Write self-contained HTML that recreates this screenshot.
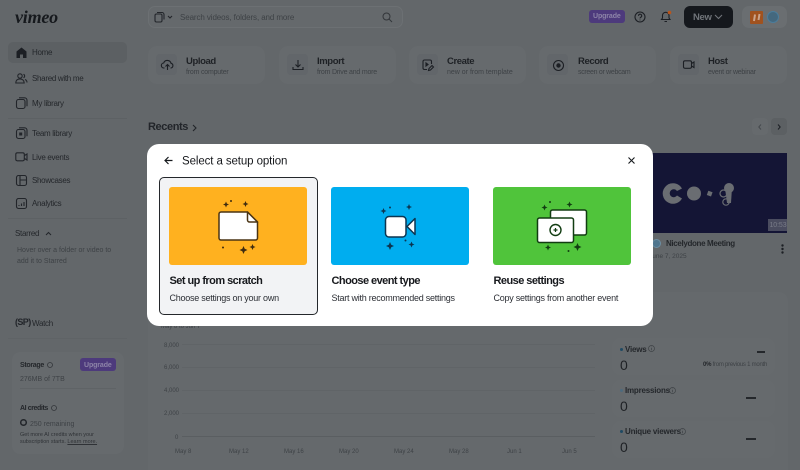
<!DOCTYPE html>
<html><head><meta charset="utf-8">
<style>
html,body{margin:0;padding:0;width:800px;height:470px;overflow:hidden;background:#63676a;font-family:"Liberation Sans",sans-serif}
#w{position:absolute;left:0;top:0;width:800px;height:470px;overflow:hidden;filter:blur(.35px)}
.t{position:absolute;white-space:nowrap;line-height:1;color:#24272b}
.b{position:absolute;box-sizing:border-box}
svg{position:absolute;overflow:visible;fill:none}
.n{font-size:8px;color:#24272b;letter-spacing:-.3px}
.c{background:#666a6d;border-radius:9px;height:38px;width:117px;top:46px}
.cs{position:absolute;left:8px;top:8px;width:21px;height:21px;background:#62666a;border-radius:4px}
.h{font-size:9.5px;font-weight:700;color:#1e2125;letter-spacing:-.4px}
.s{font-size:7px;color:#3e4246;letter-spacing:-.2px}
.g{position:absolute;left:182px;width:413px;height:1px;background:#606467}
.l{font-size:6px;color:#3e4246}
.k{background:#666a6d;border-radius:8px;left:612px;width:163px;height:37px}
.m{font-size:8px;font-weight:700;color:#24272b;letter-spacing:-.2px}
.z{font-size:14px;color:#1e2125}
.d{position:absolute;width:3px;height:3px;border-radius:50%;background:#1f4a63}
.ct{font-size:11px;font-weight:700;color:#17191d;letter-spacing:-.55px}
.cd{font-size:9px;color:#2c2f35;letter-spacing:-.25px}
</style></head><body><div id="w">

<!-- top bar -->
<div class="t" style="left:15px;top:7px;font:italic 700 18px 'Liberation Serif',serif;color:#16191d;letter-spacing:-.2px">vimeo</div>
<div class="b" style="left:148px;top:6px;width:255px;height:22px;border:1px solid #6c7073;border-radius:7px;background:#65696c"></div>
<svg style="left:154px;top:11px" width="20" height="12" stroke="#22252a" stroke-width="1.100"><rect x="1" y="3" width="7" height="8" rx="1.500"/><path d="M3 1.500h5a2 2 0 0 1 2 2v5"/><path d="M14 5l2 2 2-2"/></svg>
<div class="t" style="left:180px;top:13.500px;font-size:8px;color:#3e4246;letter-spacing:-.1px">Search videos, folders, and more</div>
<svg style="left:382px;top:12px" width="11" height="11" stroke="#33363a" stroke-width="1"><circle cx="4.500" cy="4.500" r="3.500"/><path d="M7 7l3 3"/></svg>

<div class="b" style="left:589px;top:10px;width:36px;height:13px;background:#4d3a7c;border-radius:3px"></div>
<div class="t" style="left:593px;top:13px;font-size:7px;font-weight:700;color:#8d84a8;letter-spacing:-.1px">Upgrade</div>
<svg style="left:634px;top:11px" width="12" height="12" stroke="#1c1f24" stroke-width="1.100"><circle cx="6" cy="6" r="5"/><path d="M4.500 4.800a1.600 1.600 0 1 1 2.300 1.400c-.6.300-.8.600-.8 1.200M6 8.600v.8"/></svg>
<svg style="left:660px;top:10px" width="12" height="13" stroke="#1c1f24" stroke-width="1.100"><path d="M1.500 9.500h8.500l-1-1.500V5a3.300 3.300 0 0 0-6.500 0v3zM4.500 11.500h2.500"/><circle cx="9.500" cy="2.500" r="1.800" fill="#b9551c" stroke="none"/></svg>
<div class="b" style="left:684px;top:6px;width:49px;height:22px;background:#15181d;border-radius:6px"></div>
<div class="t" style="left:693px;top:12.500px;font-size:9.500px;font-weight:700;color:#70747a;letter-spacing:-.3px">New</div>
<svg style="left:714px;top:14px" width="9" height="6" stroke="#70747a" stroke-width="1.100"><path d="M1 1l3.500 3.500L8 1"/></svg>
<div class="b" style="left:742px;top:6px;width:45px;height:22px;background:#6a6e71;border-radius:7px"></div>
<div class="b" style="left:750px;top:11px;width:13px;height:13px;background:#a0521f;border-radius:1px"></div>
<svg style="left:752px;top:13px" width="9" height="9" stroke="#caa48c" stroke-width="2"><path d="M3 1.500L2 8M7.500 1L6.500 7"/></svg>
<div class="b" style="left:767px;top:11px;width:12px;height:12px;background:#44687e;border-radius:50%;border:1.500px solid #4a7d9c"></div>

<!-- sidebar -->
<div class="b" style="left:8px;top:42px;width:119px;height:21px;background:#5c6063;border-radius:5px"></div>
<svg style="left:16px;top:47px" width="11" height="11"><path fill="#1c1f24" d="M5.500.5L.5 4.500V11h3.500V7.500h3V11h3.500V4.500z"/></svg>
<div class="t n" style="left:32px;top:49px">Home</div>
<svg style="left:15px;top:73px" width="13" height="11" stroke="#22252a" stroke-width="1.100"><circle cx="5" cy="3" r="2.200"/><path d="M.8 10c0-2.800 1.800-4 4.200-4s4 1 4.200 4zM8.500 1.200a2 2 0 0 1 0 3.600M10 6.500c1.300.5 2 1.600 2 3"/></svg>
<div class="t n" style="left:32px;top:75px;">Shared with me</div>
<svg style="left:16px;top:97px" width="12" height="12" stroke="#22252a" stroke-width="1.100"><rect x=".5" y="2.500" width="8.500" height="9" rx="2"/><path d="M3 .8h5.500a2.500 2.500 0 0 1 2.500 2.500v6"/></svg>
<div class="t n" style="left:32px;top:100px">My library</div>
<div class="b" style="left:8px;top:118px;width:119px;height:1px;background:#5d6164"></div>
<svg style="left:16px;top:127px" width="12" height="12" stroke="#22252a" stroke-width="1.100"><rect x=".5" y="2.500" width="8.500" height="9" rx="2"/><path d="M3 .8h5.500a2.500 2.500 0 0 1 2.500 2.500v6"/><rect x="3.200" y="5.500" width="3" height="3" fill="#22252a" stroke="none"/></svg>
<div class="t n" style="left:32px;top:130px">Team library</div>
<svg style="left:15px;top:152px" width="13" height="10" stroke="#22252a" stroke-width="1.100"><rect x=".8" y=".8" width="8.500" height="8" rx="1.500"/><path d="M9.500 3.500l2.500-1.500v6L9.500 6.500"/></svg>
<div class="t n" style="left:32px;top:153.500px">Live events</div>
<svg style="left:16px;top:175px" width="11" height="11" stroke="#22252a" stroke-width="1.100"><rect x=".5" y=".5" width="10" height="10" rx="2"/><path d="M4 .5v10M4 5h6.500"/></svg>
<div class="t n" style="left:32px;top:177px">Showcases</div>
<svg style="left:16px;top:198px" width="11" height="11" stroke="#22252a" stroke-width="1.100"><rect x=".5" y=".5" width="10" height="10" rx="2"/><path d="M3 8V7M5.500 8V5.500M8 8V4"/></svg>
<div class="t n" style="left:32px;top:200px">Analytics</div>
<div class="b" style="left:8px;top:218px;width:119px;height:1px;background:#5d6164"></div>
<div class="t n" style="left:15px;top:230px">Starred</div>
<svg style="left:45px;top:231px" width="7" height="5" stroke="#22252a" stroke-width="1"><path d="M1 4l2.500-2.500L6 4"/></svg>
<div class="t" style="left:17px;top:246px;font-size:7px;line-height:10.500px;color:#3e4246">Hover over a folder or video to<br>add it to Starred</div>
<div class="t" style="left:15px;top:318px;font-size:9px;color:#22252a;font-weight:700;letter-spacing:-.6px">(SP)</div>
<div class="t n" style="left:32px;top:320px;">Watch</div>
<div class="b" style="left:8px;top:338px;width:119px;height:1px;background:#5f6366"></div>
<div class="b" style="left:12px;top:352px;width:112px;height:102px;background:#666a6d;border-radius:8px"></div>
<div class="t" style="left:20px;top:362px;font-size:7px;font-weight:700;color:#24272b;letter-spacing:-.3px">Storage</div>
<svg style="left:47px;top:362px" width="6" height="6" stroke="#33363a" stroke-width=".8"><circle cx="3" cy="3" r="2.500"/></svg>
<div class="b" style="left:80px;top:358px;width:36px;height:13px;background:#4d3a7c;border-radius:3px"></div>
<div class="t" style="left:84px;top:361.500px;font-size:7px;font-weight:700;color:#8d84a8;letter-spacing:-.1px">Upgrade</div>
<div class="t" style="left:20px;top:376px;font-size:7px;color:#3e4246">276MB of 7TB</div>
<div class="b" style="left:20px;top:388px;width:96px;height:1px;background:#5f6366"></div>
<div class="t" style="left:20px;top:405px;font-size:7px;font-weight:700;color:#24272b;letter-spacing:-.4px">AI credits</div>
<svg style="left:51px;top:405px" width="6" height="6" stroke="#33363a" stroke-width=".8"><circle cx="3" cy="3" r="2.500"/></svg>
<svg style="left:20px;top:419px" width="7" height="7" stroke="#22252a" stroke-width="1.500"><circle cx="3.500" cy="3.500" r="2.800"/></svg>
<div class="t" style="left:30px;top:420.500px;font-size:7px;color:#3e4246">250 remaining</div>
<div class="t" style="left:20px;top:432px;font-size:5.500px;line-height:7px;color:#2f3236">Get more AI credits when your<br>subscription starts. <u>Learn more.</u></div>

<!-- action cards -->
<div class="b c" style="left:148px"><div class="cs"></div></div>
<svg style="left:161px;top:59px" width="13" height="12" stroke="#1c1f24" stroke-width="1.100"><path d="M3.500 9H3a2.500 2.500 0 0 1-.3-5 3.800 3.800 0 0 1 7.300.3A2.400 2.400 0 0 1 10 9h-.5M6.500 11V6M4.500 7.500l2-2 2 2"/></svg>
<div class="t h" style="left:186px;top:56.500px">Upload</div><div class="t s" style="left:186px;top:68.500px">from computer</div>
<div class="b c" style="left:279px"><div class="cs"></div></div>
<svg style="left:292px;top:59px" width="12" height="12" stroke="#1c1f24" stroke-width="1.100"><path d="M6 1v7M3.500 5.500L6 8l2.500-2.500M1 8v2.500h10V8"/></svg>
<div class="t h" style="left:317px;top:56.500px">Import</div><div class="t s" style="left:317px;top:68.500px">from Drive and more</div>
<div class="b c" style="left:409px"><div class="cs"></div></div>
<svg style="left:422px;top:59px" width="13" height="13" stroke="#1c1f24" stroke-width="1.100"><path d="M5 10.500H2.500a1.500 1.500 0 0 1-1.500-1.500V2.500A1.500 1.500 0 0 1 2.500 1H8a1.500 1.500 0 0 1 1.500 1.500V5M6.500 11.500l.5-2 3-3 1.500 1.500-3 3z"/><path d="M4 4l2 1.500L4 7z" fill="#1c1f24"/></svg>
<div class="t h" style="left:447px;top:56.500px">Create</div><div class="t s" style="left:447px;top:68.500px;letter-spacing:0">new or from template</div>
<div class="b c" style="left:539px"><div class="cs"></div></div>
<svg style="left:552px;top:59px" width="13" height="13" stroke="#1c1f24" stroke-width="1.100"><circle cx="6.500" cy="6.500" r="5"/><circle cx="6.500" cy="6.500" r="2.200" fill="#1c1f24" stroke="none"/></svg>
<div class="t h" style="left:578px;top:56.500px">Record</div><div class="t s" style="left:578px;top:68.500px;letter-spacing:-.3px">screen or webcam</div>
<div class="b c" style="left:670px"><div class="cs"></div></div>
<svg style="left:683px;top:60px" width="12" height="10" stroke="#1c1f24" stroke-width="1.100"><rect x=".5" y=".8" width="8" height="7.500" rx="1.500"/><path d="M8.500 3.500l2.500-1.500v5.500L8.500 6"/></svg>
<div class="t h" style="left:708px;top:56.500px">Host</div><div class="t s" style="left:708px;top:68.500px;letter-spacing:-.25px">event or webinar</div>

<div class="t" style="left:148px;top:122px;font-size:11px;font-weight:700;color:#22252a;letter-spacing:-.4px">Recents</div>
<svg style="left:192px;top:123.500px" width="5" height="8" stroke="#22252a" stroke-width="1.100"><path d="M1 1l3 3-3 3"/></svg>
<div class="b" style="left:752px;top:118px;width:16px;height:17px;background:#666a6d;border-radius:4px"></div>
<svg style="left:758px;top:124px" width="4" height="6" stroke="#45494d" stroke-width="1"><path d="M3 .5L.8 3 3 5.500"/></svg>
<div class="b" style="left:771px;top:118px;width:16px;height:17px;background:#5c6063;border-radius:4px"></div>
<svg style="left:777px;top:124px" width="4" height="6" stroke="#1c1f24" stroke-width="1"><path d="M1 .5L3.200 3 1 5.500"/></svg>

<!-- thumbnail -->
<div class="b" style="left:640px;top:153px;width:147px;height:80px;background:#141535"></div>
<svg style="left:660px;top:180px" width="80" height="30">
<path fill="#6a6d72" d="M22 8.500A10.300 10.300 0 1 0 22 18.500L17 15.500a4 4 0 1 1 0-4.500z"/>
<circle cx="34" cy="13.500" r="7" fill="#6a6d72"/>
<rect x="47.500" y="11.500" width="4.500" height="4.500" fill="#6a6d72" transform="rotate(20 50 13.500)"/>
<circle cx="69" cy="8" r="5" fill="#6a6d72"/>
<path fill="#6a6d72" d="M65 8h7l-1 15h-4z"/>
<circle cx="63.500" cy="13.500" r="3.500" stroke="#6a6d72" stroke-width="1.200"/>
<circle cx="66" cy="22" r="3.200" stroke="#6a6d72" stroke-width="1.200"/>
</svg>
<div class="b" style="left:768px;top:219px;width:19px;height:12px;background:#4a4c5f"></div>
<div class="t" style="left:769.500px;top:222px;font-size:7px;color:#797c88;letter-spacing:-.1px">10:53</div>
<div class="b" style="left:652px;top:239px;width:9px;height:9px;background:#50768e;border-radius:50%;border:1px solid #6b8ea3"></div>
<div class="t" style="left:666px;top:240px;font-size:8px;font-weight:700;color:#24272b;letter-spacing:-.35px">Nicelydone Meeting</div>
<div class="t" style="left:649px;top:253.500px;font-size:6.500px;color:#3e4246">June 7, 2025</div>
<svg style="left:781px;top:244px" width="3" height="10"><circle fill="#1c1f24" cx="1.500" cy="1.500" r="1.200"/><circle fill="#1c1f24" cx="1.500" cy="5" r="1.200"/><circle fill="#1c1f24" cx="1.500" cy="8.500" r="1.200"/></svg>

<!-- chart -->
<div class="b" style="left:148px;top:292px;width:640px;height:178px;background:#65696c;border-radius:9px 9px 0 0"></div>
<div class="t l" style="left:161px;top:324px">May 8 to Jun 7</div>
<div class="g" style="top:344px"></div><div class="g" style="top:367px"></div><div class="g" style="top:390px"></div><div class="g" style="top:413px"></div><div class="g" style="top:436px;background:#5a5e61"></div>
<div class="t l" style="left:164px;top:342.500px">8,000</div>
<div class="t l" style="left:164px;top:365px">6,000</div>
<div class="t l" style="left:164px;top:388px">4,000</div>
<div class="t l" style="left:164px;top:411px">2,000</div>
<div class="t l" style="left:175px;top:434.500px">0</div>
<div class="t l" style="left:175px;top:449px">May 8</div>
<div class="t l" style="left:229px;top:449px">May 12</div>
<div class="t l" style="left:284px;top:449px">May 16</div>
<div class="t l" style="left:339px;top:449px">May 20</div>
<div class="t l" style="left:394px;top:449px">May 24</div>
<div class="t l" style="left:449px;top:449px">May 28</div>
<div class="t l" style="left:507px;top:449px">Jun 1</div>
<div class="t l" style="left:562px;top:449px">Jun 5</div>

<div class="b k" style="top:338px"></div>
<div class="d" style="left:620px;top:348px"></div>
<div class="t m" style="left:625px;top:346px">Views</div>
<svg style="left:648px;top:345px" width="7" height="7" stroke="#3e4246" stroke-width=".7"><circle cx="3.500" cy="3.500" r="3"/><path d="M3.500 3v2.200M3.500 1.800v.5"/></svg>
<div class="t z" style="left:620px;top:358px">0</div>
<div class="b" style="left:757px;top:351px;width:8px;height:1.500px;background:#24272b"></div>
<div class="t" style="left:703px;top:362px;font-size:6px;color:#3e4246;letter-spacing:-.25px"><b style="color:#24272b">0%</b> from previous 1 month</div>
<div class="b k" style="top:380px"></div>
<div class="d" style="left:620px;top:389px;background:#4d6b7e"></div>
<div class="t m" style="left:625px;top:387px">Impressions</div>
<svg style="left:669px;top:387px" width="7" height="7" stroke="#3e4246" stroke-width=".7"><circle cx="3.500" cy="3.500" r="3"/><path d="M3.500 3v2.200M3.500 1.800v.5"/></svg>
<div class="t z" style="left:620px;top:399px">0</div>
<div class="b" style="left:746px;top:397px;width:10px;height:1.500px;background:#24272b"></div>
<div class="b k" style="top:421px"></div>
<div class="d" style="left:620px;top:430px"></div>
<div class="t m" style="left:625px;top:428px">Unique viewers</div>
<svg style="left:679px;top:428px" width="7" height="7" stroke="#3e4246" stroke-width=".7"><circle cx="3.500" cy="3.500" r="3"/><path d="M3.500 3v2.200M3.500 1.800v.5"/></svg>
<div class="t z" style="left:620px;top:440px">0</div>
<div class="b" style="left:746px;top:438px;width:10px;height:1.500px;background:#24272b"></div>

<!-- modal -->
<div class="b" style="left:147px;top:144px;width:506px;height:182px;background:#fff;border-radius:12px"></div>
<svg style="left:164px;top:156px" width="9" height="9" stroke="#16191d" stroke-width="1.200"><path d="M8.500 4.500H1M4.500 1L1 4.500 4.500 8"/></svg>
<div class="t" style="left:182px;top:155px;font-size:11.500px;line-height:13px;padding-top:0;color:#17191d;letter-spacing:-.1px;transform:translateY(.5px)">Select a setup option</div>
<svg style="left:628px;top:157px" width="7" height="7" stroke="#16191d" stroke-width="1.100"><path d="M.5.500l6 6M6.500.500l-6 6"/></svg>

<div class="b" style="left:159px;top:177px;width:159px;height:138px;background:#f2f3f5;border:1.500px solid #24272b;border-radius:5px"></div>
<div class="b" style="left:169px;top:187px;width:138px;height:78px;background:#ffb11f;border-radius:3px"></div>
<div class="b" style="left:331px;top:187px;width:138px;height:78px;background:#00adef;border-radius:3px"></div>
<div class="b" style="left:493px;top:187px;width:138px;height:78px;background:#50c43b;border-radius:3px"></div>

<!-- art 1: page with folded corner -->
<svg style="left:169px;top:187px" width="138" height="78">
<path d="M78.500 25H52a2 2 0 0 0-2 2v24a2 2 0 0 0 2 2h34.500a2 2 0 0 0 2-2V35z" fill="#fff" stroke="#4a3414" stroke-width="1.500" stroke-linejoin="round"/>
<path d="M78.500 25v8a2 2 0 0 0 2 2h8z" fill="#fff" stroke="#4a3414" stroke-width="1.500" stroke-linejoin="round"/>
<g fill="#3f2c10">
<path transform="translate(57 17.500)" d="M0-3l.9 2.100 2.100.9-2.100.9-.9 2.100-.9-2.100-2.100-.9 2.100-.9z"/>
<path transform="translate(76.500 17)" d="M0-3l.9 2.100 2.100.9-2.100.9-.9 2.100-.9-2.100-2.100-.9 2.100-.9z"/>
<circle cx="62" cy="14" r="1"/>
<circle cx="54" cy="60.500" r="1"/>
<path transform="translate(74.500 63)" d="M0-4l1.200 2.800 2.800 1.200-2.800 1.200-1.200 2.800-1.200-2.800-2.800-1.200 2.800-1.200z"/>
<path transform="translate(83.500 60)" d="M0-3l.9 2.100 2.100.9-2.100.9-.9 2.100-.9-2.100-2.100-.9 2.100-.9z"/>
</g></svg>
<!-- art 2: video camera -->
<svg style="left:331px;top:187px" width="138" height="78">
<rect x="54.500" y="29.500" width="20.500" height="20.500" rx="3.500" fill="#fff" stroke="#0c3550" stroke-width="1.500"/>
<path d="M84 31.500v16L76 39.500z" fill="#fff" stroke="#0c3550" stroke-width="1.500" stroke-linejoin="round"/>
<g fill="#0c3550">
<path transform="translate(52.500 24)" d="M0-3l.9 2.100 2.100.9-2.100.9-.9 2.100-.9-2.100-2.100-.9 2.100-.9z"/>
<path transform="translate(78 20)" d="M0-3l.9 2.100 2.100.9-2.100.9-.9 2.100-.9-2.100-2.100-.9 2.100-.9z"/>
<circle cx="59" cy="20.500" r="1"/>
<circle cx="74.500" cy="53.500" r="1"/>
<path transform="translate(59 59)" d="M0-4l1.200 2.800 2.800 1.200-2.800 1.200-1.200 2.800-1.200-2.800-2.800-1.200 2.800-1.200z"/>
<path transform="translate(80.500 57.500)" d="M0-3l.9 2.100 2.100.9-2.100.9-.9 2.100-.9-2.100-2.100-.9 2.100-.9z"/>
</g></svg>
<!-- art 3: two screens -->
<svg style="left:493px;top:187px" width="138" height="78">
<rect x="57.500" y="23" width="36" height="25" rx="2" fill="#fff" stroke="#123d12" stroke-width="1.500"/>
<rect x="44.500" y="31" width="36" height="24.500" rx="2" fill="#fff" stroke="#123d12" stroke-width="1.500"/>
<circle cx="62.500" cy="43" r="5.500" fill="#fff" stroke="#123d12" stroke-width="1.400"/>
<path d="M60.500 43h4M62.500 41v4" stroke="#123d12" stroke-width="1.200"/>
<g fill="#123d12">
<path transform="translate(51.500 20.500)" d="M0-3l.9 2.100 2.100.9-2.100.9-.9 2.100-.9-2.100-2.100-.9 2.100-.9z"/>
<path transform="translate(76.500 17.500)" d="M0-3l.9 2.100 2.100.9-2.100.9-.9 2.100-.9-2.100-2.100-.9 2.100-.9z"/>
<circle cx="57" cy="15" r="1"/>
<circle cx="75.500" cy="64" r="1"/>
<path transform="translate(55 60.500)" d="M0-3l.9 2.100 2.100.9-2.100.9-.9 2.100-.9-2.100-2.100-.9 2.100-.9z"/>
<path transform="translate(84.500 60)" d="M0-4l1.200 2.800 2.800 1.200-2.800 1.200-1.200 2.800-1.200-2.800-2.800-1.200 2.800-1.200z"/>
</g></svg>

<div class="t ct" style="left:169.500px;top:276px">Set up from scratch</div>
<div class="t cd" style="left:169.500px;top:294px">Choose settings on your own</div>
<div class="t ct" style="left:331.500px;top:276px">Choose event type</div>
<div class="t cd" style="left:331.500px;top:294px">Start with recommended settings</div>
<div class="t ct" style="left:493.500px;top:276px">Reuse settings</div>
<div class="t cd" style="left:493.500px;top:294px">Copy settings from another event</div>
</div></body></html>
